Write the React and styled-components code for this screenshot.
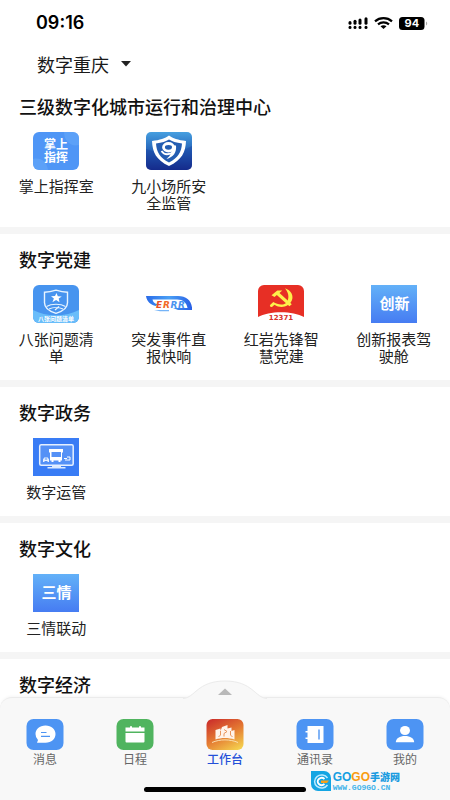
import React, { useState } from 'react';
import styled, { createGlobalStyle } from 'styled-components';

const GlobalStyle = createGlobalStyle`
  * {
    box-sizing: border-box;
  }
  body {
    margin: 0;
    background: #fff;
    color: #111;
    font-family: "Noto Sans CJK SC", sans-serif;
  }
`;

const Screen = styled.div`
  display: flex;
  flex-direction: column;
  height: 100vh;
  overflow: hidden;
`;

const StatusBar = styled.div`
  display: flex;
  flex: none;
  align-items: center;
  justify-content: space-between;
  height: 46px;
  padding: 0 22px 0 36px;
`;

const Clock = styled.time`
  font: 600 18px/20px Inter, sans-serif;
  color: #000;
`;

const StatusIcons = styled.div`
  display: flex;
  align-items: center;
  gap: 6px;
`;

const Header = styled.header`
  display: flex;
  flex: none;
  align-items: center;
  height: 35px;
  padding: 0 36px 0 37px;
`;

const RegionButton = styled.button`
  display: flex;
  align-items: center;
  gap: 12px;
  padding: 0;
  border: 0;
  background: none;
  color: #1a1a1a;
  font: 400 18px/24px "Noto Sans CJK SC", sans-serif;
`;

const Main = styled.main`
  flex: 1;
  min-height: 0;
  overflow: hidden;
`;

const Section = styled.section`
  padding: 16px 0;

  & + & {
    border-top: 7px solid #f5f5f5;
  }
`;

const SectionTitle = styled.h2`
  margin: 0 0 17px;
  padding: 0 19px;
  font-size: 18px;
  font-weight: 500;
  line-height: 18px;
`;

const AppGrid = styled.div`
  display: grid;
  grid-template-columns: repeat(4, 1fr);
`;

const AppLink = styled.a`
  display: flex;
  flex-direction: column;
  align-items: center;
  gap: 7px;
  color: #222;
  text-decoration: none;
`;

const AppLabel = styled.span`
  max-width: 76px;
  font-size: 15px;
  line-height: 17px;
  text-align: center;
`;

const TabBar = styled.nav`
  position: relative;
  flex: none;
  padding: 21px 0 8px;
  border-top: 1px solid #ebebeb;
  border-radius: 12px 12px 0 0;
  background: #f8f8f8;
  box-shadow: 0 -1px 3px rgba(0, 0, 0, 0.04);
`;

const PullUp = styled.button`
  position: absolute;
  bottom: 100%;
  left: 50%;
  height: 18px;
  padding: 0;
  border: 0;
  background: none;
  transform: translateX(-50%);

  svg {
    display: block;
    overflow: visible;
  }
`;

const Tabs = styled.div`
  display: grid;
  grid-template-columns: repeat(5, 1fr);
`;

const Tab = styled.a`
  display: flex;
  flex-direction: column;
  align-items: center;
  color: ${(props) => (props.$active ? '#2450d8' : '#666')};
  font-size: 12px;
  font-weight: ${(props) => (props.$active ? 500 : 400)};
  line-height: 17px;
  text-decoration: none;
`;

const HomeIndicator = styled.div`
  width: 36%;
  height: 5px;
  margin: 20px auto 0;
  border-radius: 3px;
  background: #000;
`;

const SiteMark = styled.div`
  position: absolute;
  right: 50px;
  bottom: 9px;
  display: flex;
  align-items: center;
  gap: 2px;
`;

const SiteName = styled.div`
  display: flex;
  align-items: center;
  color: #1a9be0;
  font-size: 10px;
  font-weight: 900;
  line-height: 14px;
`;

const SiteLetters = styled.span`
  color: ${(props) => props.$color};
  font: 700 12px/14px "Liberation Sans", sans-serif;
`;

const SiteUrl = styled.div`
  color: #45b4ea;
  font: 700 8px/7px "Liberation Mono", monospace;
`;

const Signal = () => (
  <svg width="20" height="12" viewBox="0 0 20 12" aria-hidden="true">
    {[2, 7, 12, 18].map((x, i) => (
      <g key={x} stroke="#000" strokeWidth="3" strokeLinecap="round">
        <path d={`M${x} ${5.6 - i * 1.3}V6.2`} />
        <path d={`M${x} 10.3v.1`} />
      </g>
    ))}
  </svg>
);

const Wifi = () => (
  <svg width="19" height="12" viewBox="0 0 19 12" aria-hidden="true">
    <g fill="none" stroke="#000" strokeWidth="2.2">
      <path d="M1 4.3C5.8.1 13.2.1 18 4.3" />
      <path d="M4 7.4c3.2-2.7 7.8-2.7 11 0" />
    </g>
    <path d="M6.5 9.2c1.8-1.3 4.2-1.3 6 0l-3 2.800z" />
  </svg>
);

const Battery = () => (
  <svg width="29" height="13" viewBox="0 0 29 13" aria-label="94%">
    <rect width="25.5" height="13" rx="3.5" />
    <path d="M27 4.5c1.6.6 1.6 3.4 0 4z" fill="#aaa" />
    <text x="12.8" y="10.4" fill="#fff" fontFamily="Inter, sans-serif" fontSize="11" fontWeight="700" textAnchor="middle">94</text>
  </svg>
);

const Tile = ({ children }) => (
  <svg width="46" height="38" viewBox="0 0 46 38" aria-hidden="true">
    <defs>
      <linearGradient id="sky" x2="0" y2="1">
        <stop stopColor="#63b1f8" />
        <stop offset="1" stopColor="#467cf2" />
      </linearGradient>
      <linearGradient id="navy" x2="0" y2="1">
        <stop stopColor="#469fe0" />
        <stop offset=".5" stopColor="#2462b8" />
        <stop offset="1" stopColor="#142384" />
      </linearGradient>
      <linearGradient id="swoosh" x2="1" y2="0">
        <stop stopColor="#2a6be8" />
        <stop offset=".5" stopColor="#4aa0f5" />
        <stop offset="1" stopColor="#285fe5" />
      </linearGradient>
    </defs>
    {children}
  </svg>
);

const tileText = {
  fill: '#fff',
  fontFamily: '"Noto Sans CJK SC", sans-serif',
  textAnchor: 'middle',
};

const CommandIcon = () => (
  <Tile>
    <rect width="46" height="38" rx="6" fill="#4f96f6" />
    <path d="M31 0h9a6 6 0 0 1 6 6v7C38 15 31 9 31 0zM0 27c8-2 14 3 15 11H6a6 6 0 0 1-6-6z" fill="#6aabfa" opacity=".5" />
    <text {...tileText} x="23" y="17" fontSize="12" fontWeight="700">掌上</text>
    <text {...tileText} x="23" y="30" fontSize="12" fontWeight="700">指挥</text>
  </Tile>
);

const SafetyIcon = () => (
  <Tile>
    <rect width="46" height="38" rx="5" fill="url(#navy)" />
    <path d="M0 17c15 5 31 5 46-3v19a5 5 0 0 1-5 5H5a5 5 0 0 1-5-5z" fill="#173a9a" opacity=".35" />
    <path d="M23 3.500c4 3 9 4.500 17 5.500C39.500 20 36 28 23 34 10 28 6.500 20 6 9c8-1 13-2.500 17-5.500z" fill="#fff" />
    <path d="M23 7.500c3 2 7 3.200 13 4C35.500 20 32 26 23 30.500 14 26 10.500 20 10 11.500c6-.8 10-2 13-4z" fill="#245db2" />
    <ellipse cx="22.500" cy="15.300" rx="5" ry="3.800" fill="none" stroke="#fff" strokeWidth="2.800" />
    <path d="M26 13.500h4c.8 7-2.500 11.500-9.500 13.500 3.500-3 5.500-6 5.500-13.500z" fill="#fff" />
    <path d="M15.500 19c2 3.200 6 4 10.500 2" fill="none" stroke="#fff" strokeWidth="1.800" />
  </Tile>
);

const IssuesIcon = () => (
  <Tile>
    <rect width="46" height="38" rx="6" fill="#4794ef" />
    <path d="M0 25c13 7 33 7 46 0v7a6 6 0 0 1-6 6H6a6 6 0 0 1-6-6z" fill="#69bdfa" />
    <path d="M23 5.200c4 1.300 7 2 11.500 2v10.500c0 5.300-4 8.300-11.500 10.600-7.500-2.300-11.500-5.300-11.500-10.600V7.200c4.500 0 7.500-.7 11.500-2z" fill="#4794ef" stroke="#e9f5ff" strokeWidth="1.400" />
    <path d="M23.500 8l1.300 3.200 4 .2-3.100 2 .8 3.800-3.400-2.100-3.700 2.100 1.500-3.700-2.900-2.300 4-.1z" fill="#fff" />
    <path d="M13.500 21.500c5-3 14-3 19 0M16 24c4-2 10-2 14 0M22 25l4-3.500" fill="none" stroke="#e9f5ff" strokeWidth="1.200" />
    <text {...tileText} x="23" y="36" fontSize="6" fontWeight="700">八张问题清单</text>
  </Tile>
);

const ErrrIcon = () => (
  <Tile>
    <path d="M0 11h32c8 0 13 4 14 11.500V25H32l-5-2h14.500C40.500 17.500 37 14.500 31 14.500H6.500c.5 2.500 2 4 4.500 4.500l-1 2C4.500 20 .8 16.500 0 11z" fill="url(#swoosh)" />
    <path d="M8 25h15v1.200H14z" fill="#75b4f8" />
    <g fontFamily="DejaVu Sans, sans-serif" fontSize="9" fontWeight="700" fontStyle="italic">
      <text x="10" y="22.500" fill="#e94f25">E</text>
      <text x="17" y="22.500" fill="#f26a25">R</text>
      <text x="24.500" y="22.500" fill="#4a94ef">R</text>
      <text x="32" y="22.500" fill="#4a94ef">R</text>
    </g>
  </Tile>
);

const PartyIcon = () => (
  <Tile>
    <path d="M6 0h34a6 6 0 0 1 6 6v26C35 25.500 11 25.500 0 32V6a6 6 0 0 1 6-6z" fill="#e72f25" />
    <g fill="#fdf04b">
      <path d="M27 3.200c6 2 9 7.500 6.800 12.300-3 6.700-11.500 8.200-17.300 4.200l-2.200 2.100c-1.500 1-3.200-.7-2-2l3-2.700c5 3.200 12 3.600 14.200-1.200C31.500 11.500 30 6.800 27 3.200z" />
      <path d="M13.500 10.200l5.800-4.700h5l-2.800 2.600 12.300 11.200-2.400 2L18.800 9.900l-2.300 2.200z" />
    </g>
    <text x="23" y="35" fill="#d8322a" fontFamily="DejaVu Sans, sans-serif" fontSize="7" fontWeight="700" textAnchor="middle">12371</text>
  </Tile>
);

const WordIcon = ({ word }) => (
  <Tile>
    <rect width="46" height="38" fill="url(#sky)" />
    <text {...tileText} x="23.500" y="23.500" fontSize="15" fontWeight="700">{word}</text>
  </Tile>
);

const TransportIcon = () => (
  <Tile>
    <rect width="46" height="38" fill="#397cf5" />
    <rect x="6.700" y="6.800" width="33.500" height="20.500" rx="1.500" fill="#5591f6" stroke="#e5f0ff" strokeWidth="1.500" />
    <path d="M19 28h9v1h4.500v1.400h-18V29H19z" fill="#dbeaff" />
    <path d="M16 11h14v3.500h-1v8h-1.500V24h-2v-1.500h-5V24h-2v-1.500H17v-8h-1z" fill="#fff" />
    <path d="M18.500 14h9.500v5h-9.500z" fill="#5591f6" />
    <path d="M10 24v-2.500l1.200-2h3.600l1.200 2V24h-1.500v-1h-3v1z" fill="#e9f2ff" />
    <path d="M11.800 20.500h2.400v1h-2.400z" fill="#5591f6" />
    <path d="M31 20.500h3M32 22h5M34 19h3v3" fill="none" stroke="#fff" />
  </Tile>
);

const TabTile = ({ color, children }) => (
  <svg width="38" height="31" viewBox="0 0 38 31" aria-hidden="true">
    <rect x=".5" width="37" height="31" rx="7" fill={color} />
    {children}
  </svg>
);

const MessageIcon = () => (
  <TabTile color="#4d94f3">
    <path d="M19.500 6.500c6 0 10 3.600 10 8.600s-4 8.600-10 8.600H11l1-2.800a7.800 7.800 0 0 1-2.500-5.800c0-5 4-8.600 10-8.600z" fill="#fff" />
    <path d="M15 13.500h5.500M15 17.300h9" stroke="#4d94f3" strokeWidth="1.200" />
  </TabTile>
);

const CalendarIcon = () => (
  <TabTile color="#50b45f">
    <path d="M9.500 8.500h4.500V7.300h2v1.200h7V7.300h2v1.200h3.500v4h-19zM9.500 14h19v8.500a1 1 0 0 1-1 1h-17a1 1 0 0 1-1-1z" fill="#fff" />
  </TabTile>
);

const WorkbenchIcon = () => (
  <svg width="38" height="31" viewBox="0 0 38 31" aria-hidden="true">
    <defs>
      <linearGradient id="bench" x1=".2" x2=".8" y2="1">
        <stop stopColor="#cd342b" />
        <stop offset=".5" stopColor="#e47932" />
        <stop offset="1" stopColor="#f4ce4d" />
      </linearGradient>
    </defs>
    <rect x=".5" width="37" height="31" rx="6" fill="url(#bench)" />
    <path d="M9.500 11l5-1.500V12l1.500-4 5.500-2v3.500l4-1V12l3-1v9.500c-6-2-13-2-19 0z" fill="#fff3ea" />
    <path d="M14.500 12v4l-2 2M18 10.500l3 2-3 2v3M24.500 12v4l2 2" fill="none" stroke="#e58a4c" strokeWidth=".9" />
    <path d="M6 23.500c8-3.500 18-3.500 26 0" fill="none" stroke="#fbe0b0" />
  </svg>
);

const ContactsIcon = () => (
  <TabTile color="#4d94f3">
    <path d="M11.500 7h16v17h-16v-4h-2v-1.500h2v-5h-2V12h2z" fill="#fff" />
    <path d="M23 10.500v10" stroke="#4d94f3" strokeWidth="1.400" />
  </TabTile>
);

const ProfileIcon = () => (
  <TabTile color="#4d94f3">
    <ellipse cx="19" cy="11.500" rx="5" ry="4.500" fill="#fff" />
    <path d="M9.800 23.300c0-4 4-6.300 9.200-6.300s9.200 2.300 9.200 6.300z" fill="#fff" />
  </TabTile>
);

const SiteLogo = () => (
  <svg width="20" height="20" viewBox="0 0 20 20" aria-hidden="true">
    <path d="M0 0h13a7 7 0 0 1 7 7v13H7a7 7 0 0 1-7-7z" fill="#14a5e3" />
    <path d="M16.500 7A7 6.500 0 1 0 16.500 14" fill="none" stroke="#bdeaff" strokeWidth="1.500" />
    <path d="M13.500 8a4 3.500 0 1 0 0 5" fill="none" stroke="#fff" strokeWidth="1.800" />
    <path d="M10 9.500h8L16 12h-6z" fill="#f6a21b" />
  </svg>
);

const sections = [
  {
    title: '三级数字化城市运行和治理中心',
    apps: [
      { name: '掌上指挥室', icon: <CommandIcon /> },
      { name: '九小场所安全监管', icon: <SafetyIcon /> },
    ],
  },
  {
    title: '数字党建',
    apps: [
      { name: '八张问题清单', icon: <IssuesIcon /> },
      { name: '突发事件直报快响', icon: <ErrrIcon /> },
      { name: '红岩先锋智慧党建', icon: <PartyIcon /> },
      { name: '创新报表驾驶舱', icon: <WordIcon word="创新" /> },
    ],
  },
  { title: '数字政务', apps: [{ name: '数字运管', icon: <TransportIcon /> }] },
  { title: '数字文化', apps: [{ name: '三情联动', icon: <WordIcon word="三情" /> }] },
  { title: '数字经济', apps: [] },
];

const tabs = [
  { name: '消息', icon: <MessageIcon /> },
  { name: '日程', icon: <CalendarIcon /> },
  { name: '工作台', icon: <WorkbenchIcon /> },
  { name: '通讯录', icon: <ContactsIcon /> },
  { name: '我的', icon: <ProfileIcon /> },
];

const App = () => {
  const [active, setActive] = useState('工作台');

  return (
    <>
      <GlobalStyle />
      <Screen>
        <StatusBar>
          <Clock>09:16</Clock>
          <StatusIcons>
            <Signal />
            <Wifi />
            <Battery />
          </StatusIcons>
        </StatusBar>

        <Header>
          <RegionButton type="button">
            数字重庆
            <svg width="10" height="6" viewBox="0 0 10 6" aria-hidden="true">
              <path d="M0 0h10L5 5.500z" fill="#222" />
            </svg>
          </RegionButton>
        </Header>

        <Main>
          {sections.map((section) => (
            <Section key={section.title}>
              <SectionTitle>{section.title}</SectionTitle>
              <AppGrid>
                {section.apps.map((app) => (
                  <AppLink key={app.name} href="#">
                    {app.icon}
                    <AppLabel>{app.name}</AppLabel>
                  </AppLink>
                ))}
              </AppGrid>
            </Section>
          ))}
        </Main>

        <TabBar>
          <PullUp type="button" aria-label="展开">
            <svg width="84" height="18" viewBox="0 0 84 18">
              <path d="M0 19v-1C12 18 14 1 42 1s30 17 42 17v1z" fill="#f8f8f8" />
              <path d="M0 18.500C12 18 14 1 42 1s30 17 42 17.500" fill="none" stroke="#ebebeb" />
              <path d="M35 15l7-6.500 7 6.500z" fill="#b9b9b9" />
            </svg>
          </PullUp>
          <Tabs>
            {tabs.map((tab) => (
              <Tab
                key={tab.name}
                href="#"
                $active={tab.name === active}
                onClick={() => setActive(tab.name)}
              >
                {tab.icon}
                {tab.name}
              </Tab>
            ))}
          </Tabs>
          <HomeIndicator />
          <SiteMark>
            <SiteLogo />
            <div>
              <SiteName>
                <SiteLetters $color="#169fe2">GO</SiteLetters>
                <SiteLetters $color="#f99c12">GO</SiteLetters>
                手游网
              </SiteName>
              <SiteUrl>WWW.GO9GO.CN</SiteUrl>
            </div>
          </SiteMark>
        </TabBar>
      </Screen>
    </>
  );
};

export default App;
